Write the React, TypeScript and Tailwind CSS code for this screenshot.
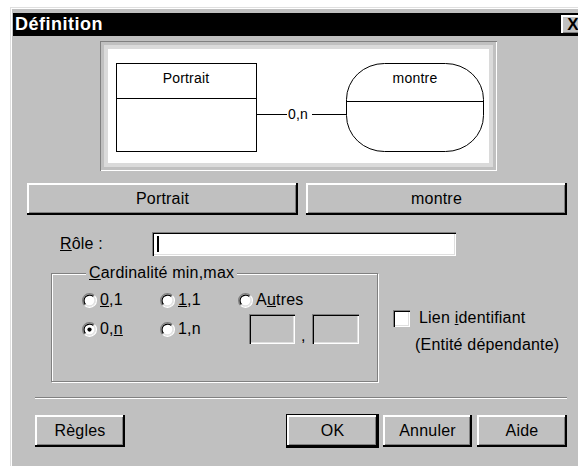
import React from "react";

const raised =
  "shadow-[inset_-2px_-2px_0_#000,inset_2px_2px_0_#fff,inset_-3px_-3px_0_#808080]";
const sunken =
  "shadow-[inset_1px_1px_0_#808080,inset_2px_2px_0_#000,inset_-1px_-1px_0_#fff,inset_-2px_-2px_0_#dfdfdf]";

function Radio({ checked }: { checked?: boolean }) {
  return (
    <svg width="15" height="15" viewBox="0 0 12 12" className="shrink-0">
      <circle cx="6" cy="6" r="5" fill="#fff" />
      <path d="M2.11 9.89A5.5 5.5 0 0 1 9.89 2.11" fill="none" stroke="#808080" />
      <path d="M9.89 2.11A5.5 5.5 0 0 1 2.11 9.89" fill="none" stroke="#fff" />
      <path d="M2.82 9.18A4.5 4.5 0 0 1 9.18 2.82" fill="none" stroke="#000" />
      <path d="M9.18 2.82A4.5 4.5 0 0 1 2.82 9.18" fill="none" stroke="#dfdfdf" />
      {checked && <circle cx="6" cy="6" r="1.7" fill="#000" />}
    </svg>
  );
}

function Option({ checked, children }: { checked?: boolean; children: React.ReactNode }) {
  return (
    <div className="flex w-[78px] items-center gap-[2px]">
      <Radio checked={checked} />
      <span className="pl-[1px]">{children}</span>
    </div>
  );
}

function Btn({
  label,
  width,
  isDefault,
}: {
  label: React.ReactNode;
  width: string;
  isDefault?: boolean;
}) {
  return (
    <button
      className={`${width} flex h-[32px] items-center justify-center bg-[#c0c0c0] ${raised} ${
        isDefault ? "outline outline-1 outline-black" : ""
      }`}
    >
      {label}
    </button>
  );
}

function Diagram() {
  return (
    <svg width="382" height="114" viewBox="0 0 382 114" className="block">
      <rect x="8.5" y="14.5" width="140" height="88" fill="#fff" stroke="#000" />
      <line x1="8.5" y1="49.5" x2="148.5" y2="49.5" stroke="#000" />
      <text
        x="78"
        y="34"
        textAnchor="middle"
        fontSize="14"
        fontFamily="Liberation Sans, Arial, sans-serif"
      >
        Portrait
      </text>
      <line x1="148.5" y1="65.5" x2="179" y2="65.5" stroke="#000" />
      <text x="180" y="70" fontSize="14" fontFamily="Liberation Sans, Arial, sans-serif">
        0,n
      </text>
      <line x1="204" y1="65.5" x2="238.5" y2="65.5" stroke="#000" />
      <rect x="238.5" y="14.5" width="137" height="88" rx="38" ry="36" fill="#fff" stroke="#000" />
      <line x1="238.5" y1="52.5" x2="375.5" y2="52.5" stroke="#000" />
      <text
        x="307"
        y="34"
        textAnchor="middle"
        fontSize="14"
        fontFamily="Liberation Sans, Arial, sans-serif"
      >
        montre
      </text>
    </svg>
  );
}

export default function App() {
  return (
    <div className="h-[466px] w-[578px] overflow-hidden bg-white font-['Liberation_Sans',Arial,sans-serif] text-[16px] tracking-[0.2px] text-black">
      <div className="ml-[10px] mt-[7px] h-[480px] w-[600px] bg-[#c0c0c0] pt-[6px] shadow-[inset_1px_1px_0_#dfdfdf,inset_2px_2px_0_#fff]">
        {/* title bar */}
        <div className="mx-[3px] flex h-[23px] items-center bg-black pl-[2px]">
          <span className="text-[18px] font-bold tracking-[0.5px] text-white">Définition</span>
          <div className="flex-1" />
          <div
            className={`mr-[22px] flex h-[20px] w-[24px] items-center justify-center bg-[#c0c0c0] text-[17px] font-bold leading-none ${raised}`}
          >
            X
          </div>
        </div>

        {/* preview */}
        <div className="ml-[90px] mt-[5px] w-[397px] bg-[#c0c0c0] p-[4px] shadow-[inset_1px_1px_0_#808080,inset_-1px_-1px_0_#fff]">
          <div className="border-[4px] border-[#dadada] bg-white">
            <Diagram />
          </div>
        </div>

        {/* entity / association buttons */}
        <div className="ml-[17px] mt-[12px] flex gap-[8px]">
          <Btn label="Portrait" width="w-[271px]" />
          <Btn label="montre" width="w-[261px]" />
        </div>

        {/* role */}
        <div className="mt-[17px] flex h-[24px] items-center">
          <span className="ml-[50px] w-[92px]">
            <span className="underline">R</span>ôle :
          </span>
          <div className={`flex h-[24px] w-[304px] items-center bg-white pl-[5px] ${sunken}`}>
            <div className="h-[16px] w-[2px] bg-black" />
          </div>
        </div>

        {/* cardinality + identifying link */}
        <div className="mt-[5px] flex">
          <fieldset className="ml-[41px] h-[121px] w-[327px] border border-[#808080] pl-[30px] pt-[6px] shadow-[1px_1px_0_#fff,inset_1px_1px_0_#fff]">
            <legend className="ml-[4px] bg-[#c0c0c0] px-[3px]">
              <span className="underline">C</span>ardinalité min,max
            </legend>
            <div className="flex h-[18px] items-center">
              <Option>
                <span className="underline">0</span>,1
              </Option>
              <Option>
                <span className="underline">1</span>,1
              </Option>
              <Option>
                A<span className="underline">u</span>tres
              </Option>
            </div>
            <div className="mt-[5px] flex h-[30px] items-center">
              <Option checked>
                0,<span className="underline">n</span>
              </Option>
              <Option>1,n</Option>
              <div className="ml-[11px] flex items-end gap-[6px]">
                <div className={`h-[30px] w-[46px] bg-[#c0c0c0] ${sunken}`} />
                <span className="leading-none">,</span>
                <div className={`h-[30px] w-[47px] bg-[#c0c0c0] ${sunken}`} />
              </div>
            </div>
          </fieldset>

          <div className="ml-[15px] mt-[45px] flex flex-col">
            <div className="flex items-center">
              <div className={`h-[17px] w-[17px] bg-white ${sunken}`} />
              <span className="ml-[9px]">
                Lien <span className="underline">i</span>dentifiant
              </span>
            </div>
            <span className="ml-[22px] mt-[3px]">(Entité dépendante)</span>
          </div>
        </div>

        {/* separator */}
        <div className="ml-[25px] mt-[15px] w-[532px] border-t border-b border-t-[#808080] border-b-white" />

        {/* bottom buttons */}
        <div className="ml-[25px] mt-[16px] flex w-[532px]">
          <Btn label="Règles" width="w-[90px]" />
          <div className="flex-1" />
          <div className="flex gap-[5px]">
            <Btn label="OK" width="w-[91px]" isDefault />
            <Btn label="Annuler" width="w-[89px]" />
            <Btn label="Aide" width="w-[90px]" />
          </div>
        </div>
      </div>
    </div>
  );
}
